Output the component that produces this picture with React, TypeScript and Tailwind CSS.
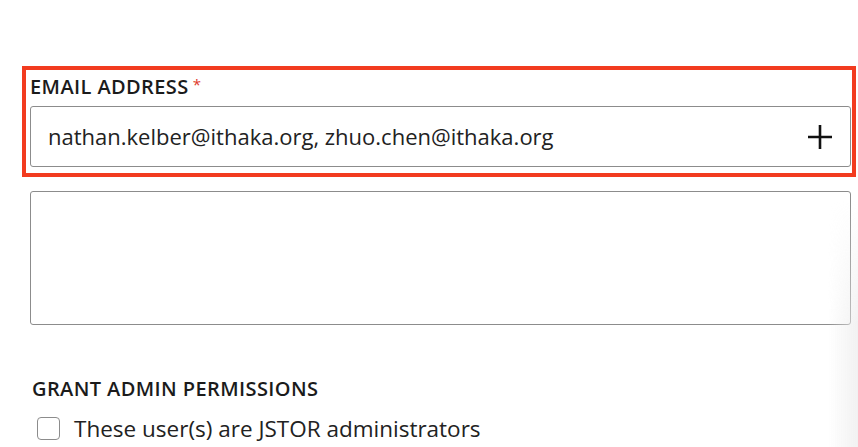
import React from "react";

export default function App() {
  return (
    <div
      className="relative w-[858px] h-[447px] overflow-hidden bg-white text-[#1b1b1b]"
      style={{ fontFamily: '"Open Sans", "Liberation Sans", Arial, sans-serif' }}
    >
      <div className="pt-[66px] pl-[22px] w-[856px]">
        <div className="border-4 border-[#f23b1f] pl-[4px] pr-px pb-[6px] pt-[4px]">
          <div className="h-[26px] leading-[26px] text-[20px] font-semibold tracking-[0.4px] flex items-center">
            <span>EMAIL ADDRESS</span>
            <span className="text-[#e0392c] ml-[4px] text-[15px] font-normal -mt-[6px]">*</span>
          </div>
          <div className="mt-[6px] h-[61px] border border-[#8c8c8c] rounded-[3px] flex items-center justify-between pl-[17px] pr-[18px]">
            <span className="text-[22px] text-[#222]">nathan.kelber@ithaka.org, zhuo.chen@ithaka.org</span>
            <svg width="24" height="24" viewBox="0 0 24 24">
              <path d="M12 0V24M0 12H24" stroke="#111" strokeWidth="2.6" fill="none" />
            </svg>
          </div>
        </div>
        <div className="ml-[8px] mr-[5px] mt-[14px] h-[134px] border border-[#8c8c8c] rounded-[3px]" />
        <div className="ml-[10px] mt-[52px] text-[20px] font-semibold tracking-[0.4px] leading-[24px]">
          GRANT ADMIN PERMISSIONS
        </div>
        <label className="ml-[15px] mt-[11px] flex items-center gap-[14px]">
          <span className="w-[23px] h-[23px] border border-[#8c8c8c] rounded-[4px] bg-white" />
          <span className="text-[22.5px] text-[#222]">These user(s) are JSTOR administrators</span>
        </label>
      </div>
      <div className="absolute right-0 top-[200px] bottom-0 w-[30px] bg-gradient-to-l from-[#ececec] to-transparent opacity-70 [mask-image:linear-gradient(to_bottom,transparent,black_50%)]" />
    </div>
  );
}
